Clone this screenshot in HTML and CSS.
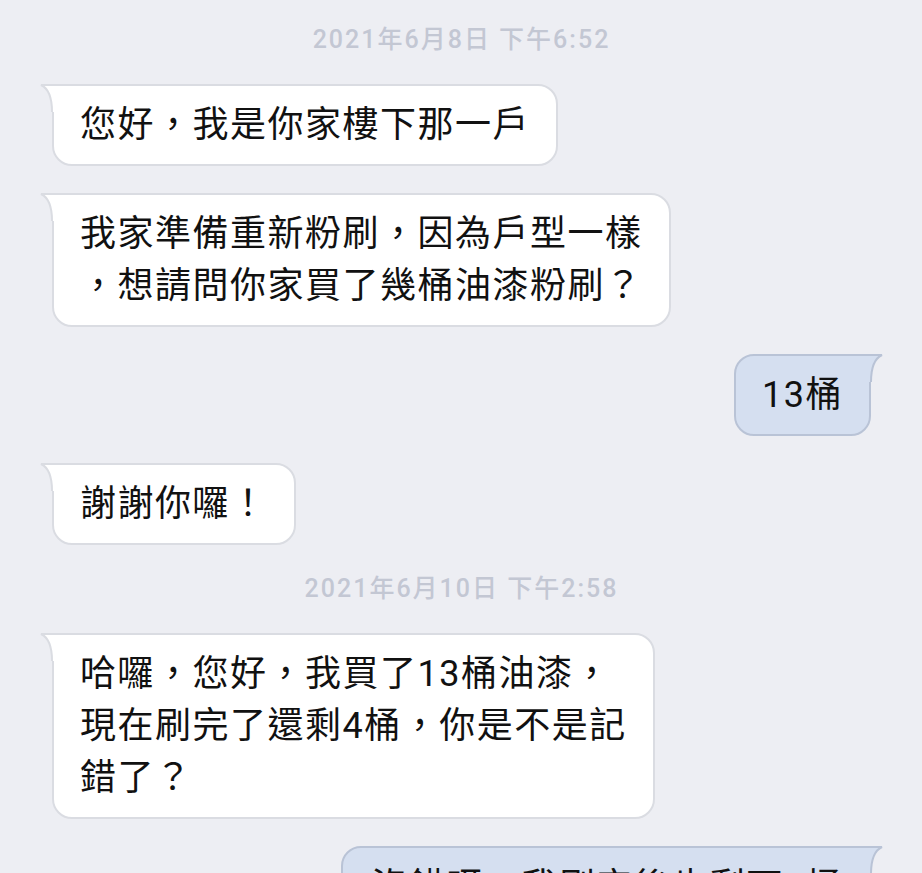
FILE: index.html
```html
<!DOCTYPE html>
<html lang="zh-Hant">
<head>
	<meta charset="UTF-8">
	<title>聊天</title>
	<link rel="stylesheet" href="styles.css">
</head>
<body>
	<div class="chat">
		<div class="stamp">2021年6月8日 下午6:52</div>

		<div class="msg msg_in">
			<svg class="tail" width="14" height="28" viewBox="0 0 14 28"><path class="tail_fill" d="M1 1 L14 1 L14 28 L12 28 Q12 6 1 1 Z"/><path class="tail_line" d="M14 1 L1 1 Q12 6 12 28"/></svg>
			您好，我是你家樓下那一戶
		</div>

		<div class="msg msg_in">
			<svg class="tail" width="14" height="28" viewBox="0 0 14 28"><path class="tail_fill" d="M1 1 L14 1 L14 28 L12 28 Q12 6 1 1 Z"/><path class="tail_line" d="M14 1 L1 1 Q12 6 12 28"/></svg>
			我家準備重新粉刷，因為戶型一樣<br>，想請問你家買了幾桶油漆粉刷？
		</div>

		<div class="msg msg_out">
			<svg class="tail" width="14" height="28" viewBox="0 0 14 28"><path class="tail_fill" d="M13 1 L0 1 L0 28 L2 28 Q2 6 13 1 Z"/><path class="tail_line" d="M0 1 L13 1 Q2 6 2 28"/></svg>
			13桶
		</div>

		<div class="msg msg_in">
			<svg class="tail" width="14" height="28" viewBox="0 0 14 28"><path class="tail_fill" d="M1 1 L14 1 L14 28 L12 28 Q12 6 1 1 Z"/><path class="tail_line" d="M14 1 L1 1 Q12 6 12 28"/></svg>
			謝謝你囉！
		</div>

		<div class="stamp">2021年6月10日 下午2:58</div>

		<div class="msg msg_in">
			<svg class="tail" width="14" height="28" viewBox="0 0 14 28"><path class="tail_fill" d="M1 1 L14 1 L14 28 L12 28 Q12 6 1 1 Z"/><path class="tail_line" d="M14 1 L1 1 Q12 6 12 28"/></svg>
			哈囉，您好，我買了13桶油漆，<br>現在刷完了還剩4桶，你是不是記<br>錯了？
		</div>

		<div class="msg msg_out msg_last">
			<svg class="tail" width="14" height="28" viewBox="0 0 14 28"><path class="tail_fill" d="M13 1 L0 1 L0 28 L2 28 Q2 6 13 1 Z"/><path class="tail_line" d="M0 1 L13 1 Q2 6 2 28"/></svg>
			沒錯呀，我刷完後也剩下4桶<br>，很正常啦！
		</div>
	</div>
</body>
</html>
```
FILE: styles.css
```css
html,body{margin:0;padding:0;}
body{background:#edeef3;width:922px;height:873px;overflow:hidden;font-family:Roboto,"Noto Sans CJK TC",sans-serif;}
.chat{display:flex;flex-direction:column;gap:27px;padding:23px 51px 0 52px;}
.stamp{align-self:center;font-size:25px;line-height:34px;font-weight:500;letter-spacing:2px;color:#c3c7d3;}
.msg{position:relative;font-size:36px;line-height:52px;letter-spacing:1.5px;color:#111;padding:13px 26px;border:2px solid #dadce2;border-radius:20px;white-space:nowrap;}
.msg_in{align-self:flex-start;background:#fff;border-top-left-radius:0;}
.msg_out{align-self:flex-end;background:#d5dff0;border-color:#b9c3d6;border-top-right-radius:0;}
.msg_last{padding-left:28px;}
.tail{position:absolute;top:-2px;display:block;}
.msg_in .tail{left:-14px;}
.msg_out .tail{right:-14px;}
.tail_line{fill:none;stroke-width:2;}
.msg_in .tail_fill{fill:#fff;}
.msg_in .tail_line{stroke:#dadce2;}
.msg_out .tail_fill{fill:#d5dff0;}
.msg_out .tail_line{stroke:#b9c3d6;}
```
